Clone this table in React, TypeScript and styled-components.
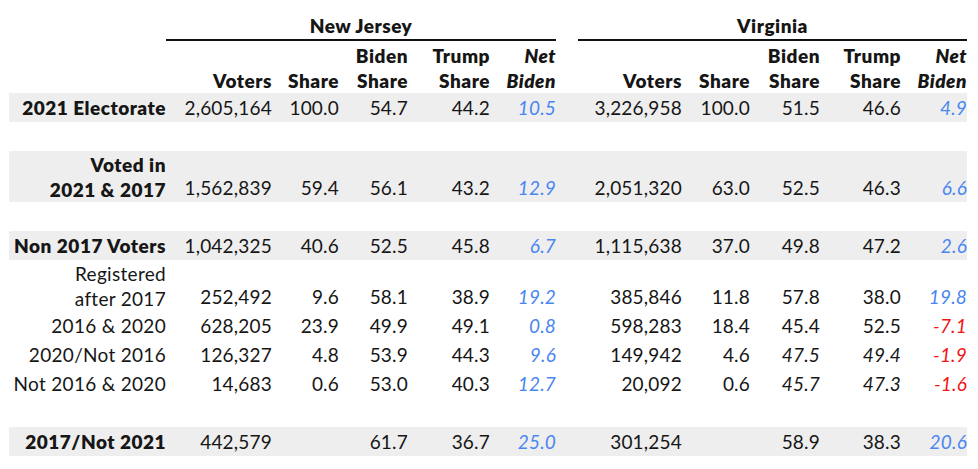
import React from "react";
import styled, { createGlobalStyle } from "styled-components";

const GlobalStyle = createGlobalStyle`
  html, body { margin: 0; padding: 0; background: #ffffff; }
  body { font-family: "Lato", "Liberation Sans", sans-serif; color: #161616; }
`;

const COLS = "157px 106px 67px 69px 82px 66px 22px 104px 68px 70px 81px 66px";

const Table = styled.div`
  padding-left: 9px;
  width: 958px;
  font-size: 19px;
  letter-spacing: 0.2px;
`;

const GroupRow = styled.div`
  display: grid;
  grid-template-columns: ${COLS};
  height: 41px;
  align-items: end;
`;

const GroupTitle = styled.div<{ $start: number }>`
  grid-column: ${(p) => p.$start} / span 5;
  text-align: center;
  font-weight: 800;
  letter-spacing: 0.5px;
  line-height: 24px;
  padding-bottom: 1px;
  border-bottom: 2px solid #111;
`;

const HeadRow = styled.div`
  display: grid;
  grid-template-columns: ${COLS};
  height: 52px;
  align-items: end;
`;

const HeadCell = styled.div<{ $italic?: boolean }>`
  text-align: right;
  font-weight: 800;
  letter-spacing: 0.5px;
  font-style: ${(p) => (p.$italic ? "italic" : "normal")};
  line-height: 25px;
`;

const Row = styled.div<{ $shaded?: boolean; $tall?: boolean }>`
  display: grid;
  grid-template-columns: ${COLS};
  height: ${(p) => (p.$tall ? 51 : 29)}px;
  align-items: center;
  background: ${(p) => (p.$shaded ? "#eeeeee" : "transparent")};
`;

const Label = styled.div<{ $bold?: boolean }>`
  text-align: right;
  font-weight: ${(p) => (p.$bold ? 800 : 400)};
  letter-spacing: ${(p) => (p.$bold ? 0.5 : 0.3)}px;
  line-height: 25px;
`;

const Cell = styled.div<{ $tone?: "pos" | "neg"; $italic?: boolean }>`
  text-align: right;
  line-height: 25px;
  align-self: end;
  padding-bottom: 2px;
  font-style: ${(p) => (p.$italic || p.$tone ? "italic" : "normal")};
  color: ${(p) =>
    p.$tone === "pos" ? "#4a86f0" : p.$tone === "neg" ? "#f01414" : "inherit"};
`;

const Spacer = styled.div``;

type Side = {
  voters: string;
  share: string;
  biden: string;
  trump: string;
  net: string;
  italicShares?: boolean;
};

type DataRow = {
  label: string[];
  bold?: boolean;
  shaded?: boolean;
  nj: Side;
  va: Side;
  gapBefore?: boolean;
};

const rows: DataRow[] = [
  {
    label: ["2021 Electorate"],
    bold: true,
    shaded: true,
    nj: { voters: "2,605,164", share: "100.0", biden: "54.7", trump: "44.2", net: "10.5" },
    va: { voters: "3,226,958", share: "100.0", biden: "51.5", trump: "46.6", net: "4.9" },
  },
  {
    label: ["Voted in", "2021 & 2017"],
    bold: true,
    shaded: true,
    gapBefore: true,
    nj: { voters: "1,562,839", share: "59.4", biden: "56.1", trump: "43.2", net: "12.9" },
    va: { voters: "2,051,320", share: "63.0", biden: "52.5", trump: "46.3", net: "6.6" },
  },
  {
    label: ["Non 2017 Voters"],
    bold: true,
    shaded: true,
    gapBefore: true,
    nj: { voters: "1,042,325", share: "40.6", biden: "52.5", trump: "45.8", net: "6.7" },
    va: { voters: "1,115,638", share: "37.0", biden: "49.8", trump: "47.2", net: "2.6" },
  },
  {
    label: ["Registered", "after 2017"],
    nj: { voters: "252,492", share: "9.6", biden: "58.1", trump: "38.9", net: "19.2" },
    va: { voters: "385,846", share: "11.8", biden: "57.8", trump: "38.0", net: "19.8" },
  },
  {
    label: ["2016 & 2020"],
    nj: { voters: "628,205", share: "23.9", biden: "49.9", trump: "49.1", net: "0.8" },
    va: { voters: "598,283", share: "18.4", biden: "45.4", trump: "52.5", net: "-7.1" },
  },
  {
    label: ["2020/Not 2016"],
    nj: { voters: "126,327", share: "4.8", biden: "53.9", trump: "44.3", net: "9.6" },
    va: { voters: "149,942", share: "4.6", biden: "47.5", trump: "49.4", net: "-1.9", italicShares: true },
  },
  {
    label: ["Not 2016 & 2020"],
    nj: { voters: "14,683", share: "0.6", biden: "53.0", trump: "40.3", net: "12.7" },
    va: { voters: "20,092", share: "0.6", biden: "45.7", trump: "47.3", net: "-1.6", italicShares: true },
  },
  {
    label: ["2017/Not 2021"],
    bold: true,
    shaded: true,
    gapBefore: true,
    nj: { voters: "442,579", share: "", biden: "61.7", trump: "36.7", net: "25.0" },
    va: { voters: "301,254", share: "", biden: "58.9", trump: "38.3", net: "20.6" },
  },
];

const SideCells: React.FC<{ s: Side }> = ({ s }) => (
  <>
    <Cell>{s.voters}</Cell>
    <Cell>{s.share}</Cell>
    <Cell $italic={s.italicShares}>{s.biden}</Cell>
    <Cell $italic={s.italicShares}>{s.trump}</Cell>
    <Cell $tone={s.net.startsWith("-") ? "neg" : "pos"}>{s.net}</Cell>
  </>
);

const HeadCells: React.FC = () => (
  <>
    <HeadCell>Voters</HeadCell>
    <HeadCell>Share</HeadCell>
    <HeadCell>
      Biden
      <br />
      Share
    </HeadCell>
    <HeadCell>
      Trump
      <br />
      Share
    </HeadCell>
    <HeadCell $italic>
      Net
      <br />
      Biden
    </HeadCell>
  </>
);

export default function App() {
  return (
    <>
      <GlobalStyle />
      <Table>
        <GroupRow>
          <GroupTitle $start={2}>New Jersey</GroupTitle>
          <GroupTitle $start={8}>Virginia</GroupTitle>
        </GroupRow>
        <HeadRow>
          <Spacer />
          <HeadCells />
          <Spacer />
          <HeadCells />
        </HeadRow>
        {rows.map((r, i) => (
          <React.Fragment key={i}>
            {r.gapBefore && <Row />}
            <Row $shaded={r.shaded} $tall={r.label.length > 1}>
              <Label $bold={r.bold}>
                {r.label.map((l, j) => (
                  <React.Fragment key={j}>
                    {j > 0 && <br />}
                    {l}
                  </React.Fragment>
                ))}
              </Label>
              <SideCells s={r.nj} />
              <Spacer />
              <SideCells s={r.va} />
            </Row>
          </React.Fragment>
        ))}
      </Table>
    </>
  );
}
